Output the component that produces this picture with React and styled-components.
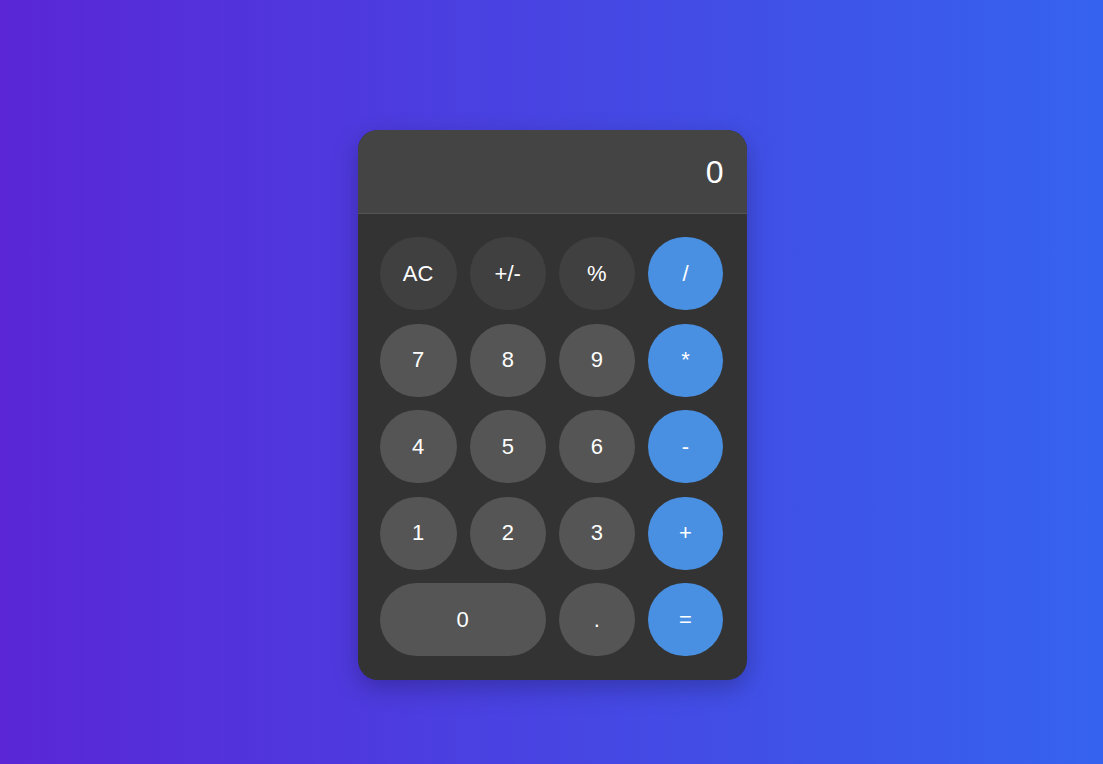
import styled, { createGlobalStyle } from "styled-components";
import { useState } from "react";

const GlobalStyle = createGlobalStyle`
  * {
    box-sizing: border-box;
  }
  html,
  body {
    margin: 0;
    padding: 0;
  }
  body {
    font-family: "Liberation Sans", Arial, sans-serif;
  }
`;

const keys = [
  { label: "AC", kind: "fn" },
  { label: "+/-", kind: "fn" },
  { label: "%", kind: "fn" },
  { label: "/", kind: "op" },
  { label: "7" },
  { label: "8" },
  { label: "9" },
  { label: "*", kind: "op" },
  { label: "4" },
  { label: "5" },
  { label: "6" },
  { label: "-", kind: "op" },
  { label: "1" },
  { label: "2" },
  { label: "3" },
  { label: "+", kind: "op" },
  { label: "0", wide: true },
  { label: "." },
  { label: "=", kind: "op" },
];

export default function App() {
  const [display] = useState("0");

  return (
    <>
      <GlobalStyle />
      <StyledPage>
        <StyledCalculator>
          <StyledDisplay>{display}</StyledDisplay>
          <StyledKeypad>
            {keys.map((key) => (
              <StyledKey key={key.label} $kind={key.kind} $wide={key.wide}>
                {key.label}
              </StyledKey>
            ))}
          </StyledKeypad>
        </StyledCalculator>
      </StyledPage>
    </>
  );
}

const StyledPage = styled.div`
  display: flex;
  justify-content: center;
  align-items: flex-start;
  width: 100%;
  min-height: 100vh;
  padding-top: 130px;
  padding-left: 1px;
  background: linear-gradient(to right, #5a26d6, #3563ef);
`;

const StyledCalculator = styled.div`
  width: 389px;
  background: #333333;
  border-radius: 20px;
  overflow: hidden;
  box-shadow: 0 8px 24px rgba(0, 0, 0, 0.25);
`;

const StyledDisplay = styled.div`
  height: 84px;
  padding: 0 23px 0 20px;
  display: flex;
  align-items: center;
  justify-content: flex-end;
  background: #444444;
  border-bottom: 1px solid #555555;
  color: #ffffff;
  font-size: 32px;
  line-height: 1;
`;

const StyledKeypad = styled.div`
  display: grid;
  grid-template-columns: 77px 75.5px 75.5px 75px;
  grid-auto-rows: 73px;
  gap: 13.5px 13.5px;
  padding: 23px 22px 23.5px;
`;

const StyledKey = styled.button`
  grid-column: ${({ $wide }) => ($wide ? "span 2" : "auto")};
  border: none;
  border-radius: 38px;
  background: ${({ $kind }) =>
    $kind === "op" ? "#4a90e2" : $kind === "fn" ? "#404040" : "#555555"};
  color: #ffffff;
  font-family: "Liberation Sans", Arial, sans-serif;
  font-size: 22px;
  cursor: pointer;
  &:focus {
    outline: none;
  }
`;
